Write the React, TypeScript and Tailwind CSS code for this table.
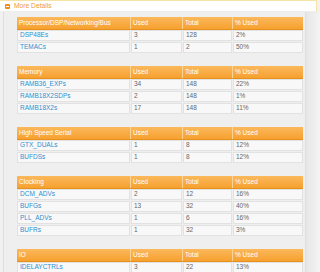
import React from 'react';

type Row = { name: string; used: string; total: string; pct: string };
type Section = { title: string; rows: Row[] };

const sections: Section[] = [
  {
    title: 'Processor/DSP/Networking/Bus',
    rows: [
      { name: 'DSP48Es', used: '3', total: '128', pct: '2%' },
      { name: 'TEMACs', used: '1', total: '2', pct: '50%' },
    ],
  },
  {
    title: 'Memory',
    rows: [
      { name: 'RAMB36_EXPs', used: '34', total: '148', pct: '22%' },
      { name: 'RAMB18X2SDPs', used: '2', total: '148', pct: '1%' },
      { name: 'RAMB18X2s', used: '17', total: '148', pct: '11%' },
    ],
  },
  {
    title: 'High Speed Serial',
    rows: [
      { name: 'GTX_DUALs', used: '1', total: '8', pct: '12%' },
      { name: 'BUFDSs', used: '1', total: '8', pct: '12%' },
    ],
  },
  {
    title: 'Clocking',
    rows: [
      { name: 'DCM_ADVs', used: '2', total: '12', pct: '16%' },
      { name: 'BUFGs', used: '13', total: '32', pct: '40%' },
      { name: 'PLL_ADVs', used: '1', total: '6', pct: '16%' },
      { name: 'BUFRs', used: '1', total: '32', pct: '3%' },
    ],
  },
  {
    title: 'IO',
    rows: [{ name: 'IDELAYCTRLs', used: '3', total: '22', pct: '13%' }],
  },
];

const cols = 'grid grid-cols-[113px_51px_49px_70px] gap-px';
const cell = 'flex items-center px-[2px] bg-[#f8f8f8] border border-[#e2e2e2] text-[6.5px] leading-none';

const UsageTable: React.FC<{ section: Section }> = ({ section }) => (
  <div className="flex flex-col gap-px w-[286px] shrink-0">
    <div className={`${cols} h-[12px] bg-[#fcd391] shadow-[0_1px_0_#e8901c]`}>
      {[section.title, 'Used', 'Total', '% Used'].map((h) => (
        <div
          key={h}
          className="flex items-center px-[2px] bg-gradient-to-b from-[#fbb85a] to-[#f6a12e] text-white text-[6.5px] leading-none"
        >
          {h}
        </div>
      ))}
    </div>
    {section.rows.map((r) => (
      <div key={r.name} className={`${cols} h-[11px]`}>
        <div className={`${cell} text-[#2f8fcf]`}>{r.name}</div>
        <div className={`${cell} text-[#666]`}>{r.used}</div>
        <div className={`${cell} text-[#666]`}>{r.total}</div>
        <div className={`${cell} text-[#666]`}>{r.pct}</div>
      </div>
    ))}
  </div>
);

export default function App() {
  return (
    <div className="w-[320px] h-[272px] overflow-hidden bg-[#f1f1f1] font-['Liberation_Sans',Arial,sans-serif]">
      <div className="w-[317px] h-[12px] bg-white border-t border-r border-[#f5e3a8] border-b-[#eeeeee] border-b flex items-center gap-[4px] pl-[5px]">
        <div className="w-[5px] h-[5px] rounded-[1px] bg-[#f08c1c] flex items-center justify-center">
          <div className="w-[3px] h-[1px] bg-white" />
        </div>
        <span className="text-[#f29a36] text-[6.7px] leading-none">More Details</span>
      </div>
      <div className="flex">
        <div className="ml-[3px] w-[303px] h-[260px] bg-[#efefef] border-l border-r border-[#dedede] pl-[13px] pt-[5px] flex flex-col gap-[13px]">
          {sections.map((s) => (
            <UsageTable key={s.title} section={s} />
          ))}
        </div>
        <div className="flex-1 bg-gradient-to-r from-[#e6e6e6] to-[#f4f4f4]" />
      </div>
    </div>
  );
}
